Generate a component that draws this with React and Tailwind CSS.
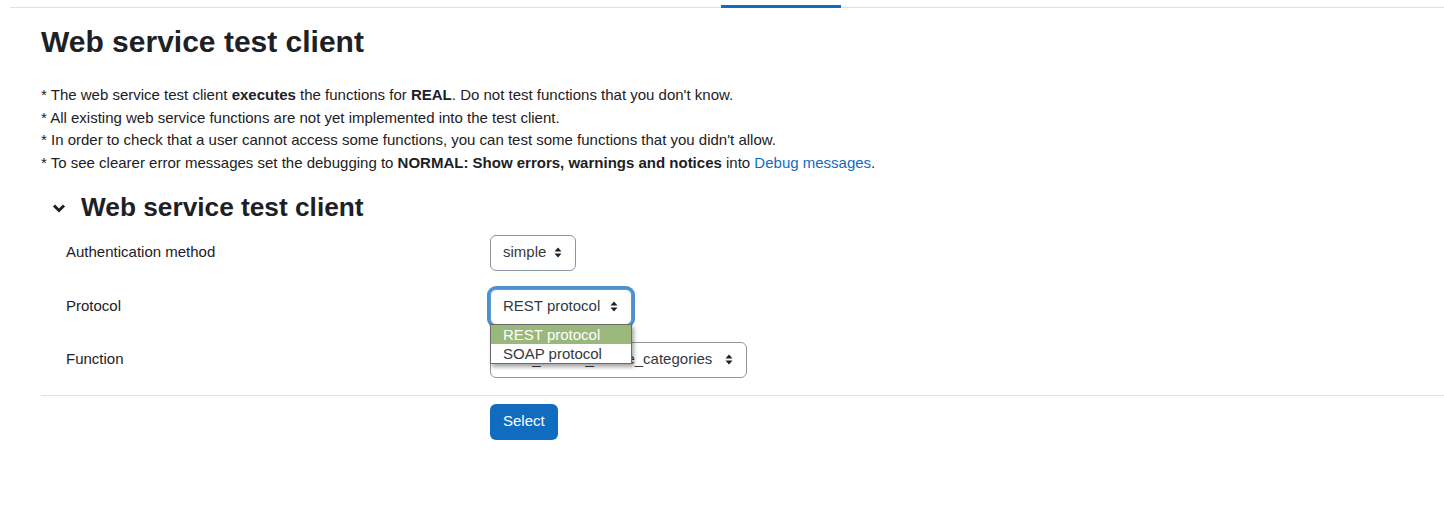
const font = { fontFamily: '"Liberation Sans", Arial, sans-serif' };

function Caret() {
  return (
    <svg width="8" height="11" viewBox="0 0 8 11" className="shrink-0">
      <path d="M4 0.5 L7.5 4.5 H0.5 Z" fill="#1d2125" />
      <path d="M4 10.5 L7.5 6.5 H0.5 Z" fill="#1d2125" />
    </svg>
  );
}

function FakeSelect({ value, width, focused, children }) {
  return (
    <div className="relative">
      <div
        className={
          "flex h-9 items-center justify-between rounded-[6px] border bg-white pl-[12px] pr-[13px] text-[15px] text-[#343a40] " +
          (focused
            ? "border-[#5b9bd5] shadow-[0_0_0_3px_rgba(15,108,191,0.75)]"
            : "border-[#8f959e]")
        }
        style={{ width }}
      >
        <span className="whitespace-nowrap">{value}</span>
        <Caret />
      </div>
      {children}
    </div>
  );
}

function Row({ label, children, className }) {
  return (
    <div className={"grid grid-cols-[449px_1fr] items-center " + className}>
      <div className="pl-[25px] text-[15px] text-[#1d2125]">{label}</div>
      <div>{children}</div>
    </div>
  );
}

export default function App() {
  return (
    <div className="min-h-[512px] bg-white text-[#1d2125]" style={font}>
      <div className="ml-[10px] border-b border-[#dee2e6] pt-[5px]">
        <div className="relative -mb-px ml-[711px] h-[3px] w-[120px] bg-[#0f6cbf]" />
      </div>

      <div className="pl-[41px]">
        <h2 className="mt-4 text-[30px] font-bold leading-[36px]">Web service test client</h2>

        <div className="mt-6 text-[15px] leading-[22.5px]">
          <div>
            * The web service test client <b>executes</b> the functions for <b>REAL</b>. Do not test functions that you don't know.
          </div>
          <div>* All existing web service functions are not yet implemented into the test client.</div>
          <div>* In order to check that a user cannot access some functions, you can test some functions that you didn't allow.</div>
          <div>
            * To see clearer error messages set the debugging to <b>NORMAL: Show errors, warnings and notices</b> into{" "}
            <span className="text-[#0f6cbf]">Debug messages</span>.
          </div>
        </div>

        <div className="mt-[18px] flex items-center">
          <svg width="14" height="10" viewBox="0 0 14 10" className="ml-[11px] mr-[15px]">
            <path d="M2 2.5 L7 7.5 L12 2.5" fill="none" stroke="#1d2125" strokeWidth="3" />
          </svg>
          <h3 className="text-[26.25px] font-bold leading-[31.5px]">Web service test client</h3>
        </div>

        <Row label="Authentication method" className="mt-[11px]">
          <FakeSelect value="simple" width={86} />
        </Row>

        <Row label="Protocol" className="relative z-10 mt-[18px]">
          <FakeSelect value="REST protocol" width={142} focused>
            <div className="absolute left-0 top-[35px] w-[142px] border border-[#6b6b6b] bg-white text-[15px] leading-[19px] shadow-[2px_3px_4px_rgba(0,0,0,0.35)]">
              <div className="bg-[#9ab77c] pl-[12px] text-white">REST protocol</div>
              <div className="pl-[12px] text-[#343a40]">SOAP protocol</div>
            </div>
          </FakeSelect>
        </Row>

        <Row label="Function" className="mt-[17px]">
          <FakeSelect value="core_course_delete_categories" width={257} />
        </Row>

        <div className="mt-[17px] border-t border-[#dee2e6]" />

        <div className="mt-2 pl-[449px]">
          <button className="h-9 rounded-[6px] bg-[#0f6cbf] px-[13px] text-[15px] text-white">Select</button>
        </div>
      </div>
    </div>
  );
}
